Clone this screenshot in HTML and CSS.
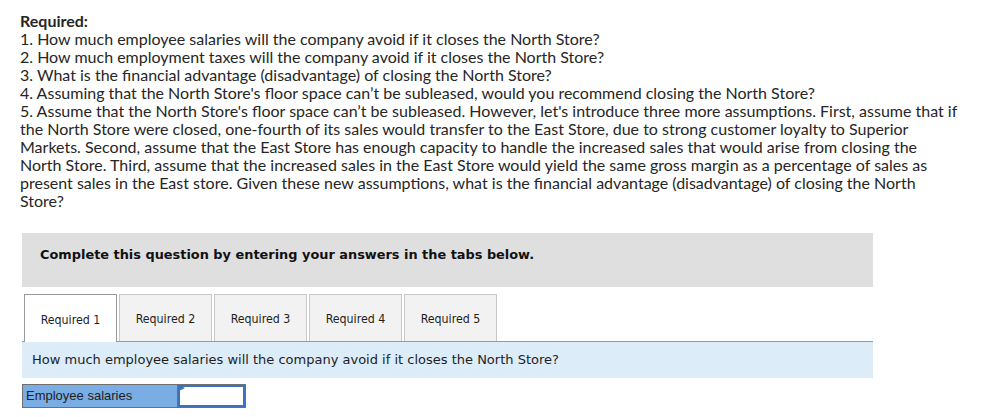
FILE: index.html
```html
<!DOCTYPE html>
<html>
<head>
<meta charset="utf-8">
<title>Required</title>
<link rel="stylesheet" href="styles.css">
</head>
<body>
<div class="question">
  <div class="req-title">Required:</div>
  <div>1. How much employee salaries will the company avoid if it closes the North Store?</div>
  <div>2. How much employment taxes will the company avoid if it closes the North Store?</div>
  <div>3. What is the financial advantage (disadvantage) of closing the North Store?</div>
  <div>4. Assuming that the North Store's floor space can’t be subleased, would you recommend closing the North Store?</div>
  <div>5. Assume that the North Store's floor space can’t be subleased. However, let's introduce three more assumptions. First, assume that if the North Store were closed, one-fourth of its sales would transfer to the East Store, due to strong customer loyalty to Superior Markets. Second, assume that the East Store has enough capacity to handle the increased sales that would arise from closing the North Store. Third, assume that the increased sales in the East Store would yield the same gross margin as a percentage of sales as present sales in the East store. Given these new assumptions, what is the financial advantage (disadvantage) of closing the North Store?</div>
</div>

<div class="instructions">Complete this question by entering your answers in the tabs below.</div>

<div class="tabs">
  <div class="tab active">Required 1</div>
  <div class="tab">Required 2</div>
  <div class="tab">Required 3</div>
  <div class="tab">Required 4</div>
  <div class="tab">Required 5</div>
</div>

<div class="prompt">How much employee salaries will the company avoid if it closes the North Store?</div>

<div class="answer-row">
  <div class="answer-label">Employee salaries</div>
  <div class="answer-cell">
    <span class="flag"></span>
    <input class="answer-input" type="text" aria-label="Employee salaries">
  </div>
</div>
</body>
</html>
```
FILE: styles.css
```css
html, body {
  margin: 0;
  padding: 0;
  background: #ffffff;
}

.question {
  font-family: Lato, "Liberation Sans", sans-serif;
  font-size: 16px;
  line-height: 18px;
  color: #262626;
  padding: 12px 0 0 20px;
  width: 940px;
}

.req-title {
  font-weight: 700;
}

.instructions {
  margin: 23px 0 0 22px;
  width: 851px;
  height: 54px;
  box-sizing: border-box;
  background: #dfdfdf;
  padding: 14px 0 0 18px;
  font-family: "DejaVu Sans", Verdana, sans-serif;
  font-weight: 700;
  font-size: 12.9px;
  line-height: 15px;
  color: #111;
}

.tabs {
  margin: 7px 0 0 22px;
  width: 851px;
  box-sizing: border-box;
  padding-left: 2px;
  display: flex;
  align-items: flex-start;
  gap: 2px;
  height: 48px;
  border-bottom: 1px solid #9a9a9a;
}

.tab {
  width: 93px;
  height: 47px;
  box-sizing: border-box;
  border: 1px solid #c8c8c8;
  border-bottom: none;
  background: #f2f2f2;
  display: flex;
  align-items: center;
  justify-content: center;
  padding-top: 2px;
  font-family: "DejaVu Sans Condensed", "DejaVu Sans", sans-serif;
  font-size: 12.3px;
  line-height: 14px;
  color: #1e1e1e;
}

.tab.active {
  background: #ffffff;
  border-color: #9a9a9a;
  height: 48px;
  position: relative;
  z-index: 1;
}

.prompt {
  margin: 0 0 0 22px;
  width: 851px;
  height: 36px;
  box-sizing: border-box;
  background: #dcecf9;
  padding: 10px 0 0 10px;
  font-family: "DejaVu Sans", Verdana, sans-serif;
  font-size: 13px;
  line-height: 15px;
  color: #1e1e1e;
}

.answer-row {
  margin: 6px 0 0 22px;
  display: flex;
  width: 224px;
  height: 24px;
  box-sizing: border-box;
  border: 1px solid #6f6f6f;
}

.answer-label {
  width: 155px;
  box-sizing: border-box;
  border-right: 1px solid #6f6f6f;
  background: #7aade3;
  padding-left: 3px;
  font-family: "Liberation Sans", Arial, sans-serif;
  font-size: 13px;
  line-height: 22px;
  color: #1e1e1e;
  white-space: nowrap;
}

.answer-cell {
  position: relative;
  width: 67px;
  height: 22px;
}

.answer-input {
  display: block;
  width: 67px;
  height: 22px;
  box-sizing: border-box;
  margin: 0;
  padding: 0 3px;
  border: 2px solid #3a72bb;
  background: #ffffff;
  outline: none;
  font-family: "Liberation Sans", Arial, sans-serif;
  font-size: 13px;
}

.flag {
  position: absolute;
  left: 1px;
  top: 0;
  width: 0;
  height: 0;
  border-left: 6px solid #3a72bb;
  border-top: 3.5px solid transparent;
  border-bottom: 3.5px solid transparent;
}
```
